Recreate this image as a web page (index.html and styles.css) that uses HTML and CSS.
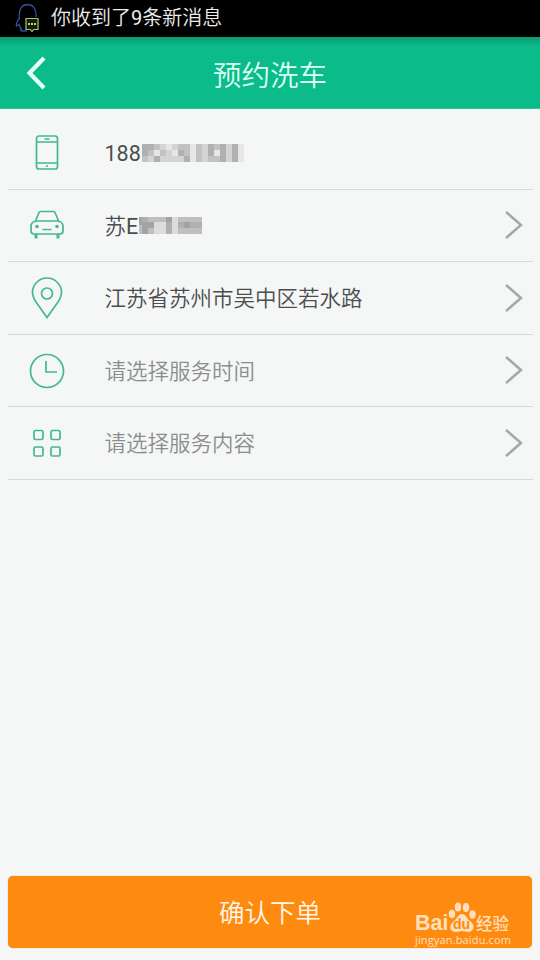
FILE: index.html
```html
<!DOCTYPE html>
<html lang="zh-CN">
<head>
<meta charset="utf-8">
<title>预约洗车</title>
<link rel="stylesheet" href="styles.css">
</head>
<body>
<div class="status">
  <svg class="status-icon" width="26" height="30" viewBox="0 0 26 30" fill="none">
    <path d="M4.500 16C3 5 8 1.500 12.500 1.500S22 5 21 14M4.500 15C2 18 1 21 1.500 23L4 21.500C4.500 24 6 25 6.500 26C5 27 5 27.500 7 28H12" stroke="#314f9c" stroke-width="1.300"/>
    <path d="M11 15.500H23V26.500H18.500L17 28.500L15.500 26.500H11Z" fill="#121c08" stroke="#a3c66b" stroke-width="1.200"/>
    <path d="M13 21H15M16 21H18M19 21H21" stroke="#b8d880" stroke-width="1.800"/>
  </svg>
  <span>你收到了<b class="latin">9</b>条新消息</span>
</div>
<header class="header">
  <svg class="back" width="20" height="34" viewBox="0 0 20 34" fill="none"><path d="M18 2L3.500 17L18 32" stroke="#e4fff6" stroke-width="4.200"/></svg>
  <h1>预约洗车</h1>
</header>
<main class="list">
  <div class="row">
    <svg class="icon" width="40" height="44" viewBox="0 0 40 44"><rect x="9.500" y="5" width="21" height="33" rx="2.500"/><path d="M9.500 11H30.500M9.500 32H30.500M17.500 8H22.500M19 35H21"/></svg>
    <div class="text"><b class="latin">188</b><svg class="mosaic" width="102" height="18" viewBox="0 0 102 18" shape-rendering="crispEdges">
      <path fill="#d4d4d4" d="M0 0H102V18H0Z"/>
      <path fill="#b0b0b0" d="M0 0H6V12H0ZM6 0H12V6H6ZM12 12H18V18H12ZM36 6H42V12H36ZM42 12H48V18H42ZM66 0H72V12H66ZM78 0H84V18H78ZM90 0H96V18H90Z"/>
      <path fill="#c2c2c2" d="M0 12H6V18H0ZM6 6H12V12H6ZM12 0H18V6H12ZM18 6H24V12H18ZM36 0H48V6H36ZM42 6H48V12H42ZM54 0H60V18H54ZM66 12H78V18H66ZM72 0H78V6H72Z"/>
      <path fill="#e6e6e6" d="M12 6H18V12H12ZM24 0H30V6H24ZM30 6H36V12H30ZM48 0H54V18H48ZM72 6H78V12H72ZM96 0H102V18H96Z"/>
    </svg></div>
  </div>
  <div class="row">
    <svg class="icon" width="40" height="44" viewBox="0 0 40 44"><path d="M8 18L12 8.500Q12.400 7.500 13.500 7.500H26.500Q27.600 7.500 28 8.500L32 18M9 17H31Q36 18 36 22.500V27Q36 30 33 30H7Q4 30 4 27V22.500Q4 18 9 17ZM15.500 25.500H24.500"/><path class="solid" d="M7.500 30H10.500V34.500H7.500ZM29.500 30H32.500V34.500H29.500Z"/><circle class="solid" cx="10" cy="22.500" r="1.800"/><circle class="solid" cx="30" cy="22.500" r="1.800"/></svg>
    <div class="text">苏<b class="latin">E</b><svg class="mosaic" width="63" height="17" viewBox="0 0 63 17" shape-rendering="crispEdges">
      <path fill="#bfbfbf" d="M0 0H63V17H0Z"/>
      <path fill="#a3a3a3" d="M0 0H3V8H0ZM3 5H9V17H3ZM9 5H15V11H9ZM27 0H33V5H27ZM45 5H51V11H45Z"/>
      <path fill="#b0b0b0" d="M3 0H9V5H3ZM27 5H33V17H27ZM39 5H45V11H39ZM51 5H63V11H51Z"/>
      <path fill="#dcdcdc" d="M15 5H21V17H15ZM21 5H27V17H21ZM33 0H39V17H33Z"/>
    </svg></div>
    <svg class="arrow" width="20" height="30" viewBox="0 0 20 30"><path d="M2 2L17 15L2 28"/></svg>
  </div>
  <div class="row">
    <svg class="icon" width="40" height="44" viewBox="0 0 40 44"><path d="M20 41.500L9 26Q5.500 20.500 5.500 16.500A14.500 14.500 0 0 1 34.500 16.500Q34.500 20.500 31 26Z"/><circle cx="20" cy="17.500" r="5.500"/></svg>
    <div class="text">江苏省苏州市吴中区若水路</div>
    <svg class="arrow" width="20" height="30" viewBox="0 0 20 30"><path d="M2 2L17 15L2 28"/></svg>
  </div>
  <div class="row">
    <svg class="icon" width="40" height="44" viewBox="0 0 40 44"><circle cx="20" cy="22" r="16.500"/><path d="M19 12V23H30"/></svg>
    <div class="text hint">请选择服务时间</div>
    <svg class="arrow" width="20" height="30" viewBox="0 0 20 30"><path d="M2 2L17 15L2 28"/></svg>
  </div>
  <div class="row">
    <svg class="icon" width="40" height="44" viewBox="0 0 40 44"><rect x="7" y="9.500" width="9" height="9" rx="1.500"/><rect x="24" y="9.500" width="9" height="9" rx="1.500"/><rect x="7" y="26" width="9" height="9" rx="1.500"/><rect x="24" y="26" width="9" height="9" rx="1.500"/></svg>
    <div class="text hint">请选择服务内容</div>
    <svg class="arrow" width="20" height="30" viewBox="0 0 20 30"><path d="M2 2L17 15L2 28"/></svg>
  </div>
</main>
<div class="submit">确认下单</div>
<div class="watermark">
  <div class="brand">
    <span class="bai">Bai</span>
    <span class="paw">
      <svg width="28" height="31" viewBox="0 0 28 31"><ellipse cx="4" cy="12" rx="3.200" ry="4.200"/><ellipse cx="10" cy="5" rx="3.200" ry="4.500"/><ellipse cx="18" cy="5.500" rx="3.200" ry="4.500"/><ellipse cx="24.500" cy="12.500" rx="3.200" ry="4.200"/><path d="M14 12C18 12 19 17 22 19C28 23 26 30 20 30C17 30 16 29 14 29S11 30 8 30C1 30 1 23 5 20C9 17 10 12 14 12Z"/></svg>
      <span class="du">du</span>
    </span>
    <span class="jingyan">经验</span>
  </div>
  <div class="url">jingyan.baidu.com</div>
</div>
</body>
</html>
```
FILE: styles.css
```css
* { box-sizing: border-box; }

body {
  margin: 0;
  width: 540px;
  height: 960px;
  position: relative;
  overflow: hidden;
  display: flex;
  flex-direction: column;
  background: #f4f7f6;
  font-family: Roboto, "Noto Sans CJK SC", sans-serif;
  font-weight: 350;
}

svg { display: block; flex: none; }

.latin { font-weight: 400; }

.status {
  height: 37px;
  padding-left: 15px;
  display: flex;
  align-items: center;
  gap: 10px;
  background: #000;
  color: #ececec;
  font-size: 20px;
  line-height: 34px;
}

.status span { margin-top: -1px; }
.status-icon { margin-top: -1px; }

.header {
  height: 72px;
  padding: 0 26px;
  display: grid;
  grid-template-columns: 20px 1fr 20px;
  align-items: center;
  background: linear-gradient(#0a9c75, #0bbb8a 10px, #0bbc8a);
  border-bottom: 1px solid #2fc49a;
}

.back { margin-top: 1px; }

h1 {
  margin: 8px 0 0;
  text-align: center;
  font-size: 28.500px;
  font-weight: 350;
  line-height: 40px;
  color: #dcfff3;
}

.list { margin: 8px 7px 0 8px; }

.row {
  height: 72.500px;
  display: flex;
  align-items: center;
  padding: 0 9.500px 0 18.500px;
  border-bottom: 1px solid #d5d9d8;
}

.icon {
  margin-top: 1px;
  fill: none;
  stroke: #44b795;
  stroke-width: 1.700;
}

.icon .solid { fill: #44b795; stroke: none; }

.text {
  flex: 1;
  margin: 3px 0 0 38px;
  display: flex;
  align-items: center;
  font-size: 21.500px;
  line-height: 30px;
  color: #4c4e4d;
}

.hint { color: #8c8e8d; }
.mosaic { margin: -2px 0 0 1px; }
.arrow { fill: none; stroke: #a4a8a7; stroke-width: 2.500; }

.submit {
  height: 72px;
  margin: auto 8px 12px;
  border-radius: 5px;
  background: #ff8a10;
  box-shadow: 0 0 1px #d48a40;
  color: #fff6e8;
  font-size: 25.500px;
  line-height: 75px;
  text-align: center;
}

.watermark {
  position: absolute;
  left: 415px;
  top: 902px;
  width: 100px;
  color: #ffe0bd;
}

.brand { display: flex; align-items: flex-end; height: 31px; }

.bai {
  width: 33px;
  font: 700 21.500px/18px "Liberation Sans", sans-serif;
  margin-bottom: 1px;
}

.paw { position: relative; fill: #ffe0bd; }

.du {
  position: absolute;
  left: 5px;
  bottom: 2px;
  font: 700 14px/14px "Liberation Sans", sans-serif;
  color: #ff8a10;
}

.jingyan {
  font-size: 16.500px;
  font-weight: 500;
  line-height: 16px;
}

.url {
  font: 11px/14px "Open Sans", sans-serif;
  letter-spacing: 0.150px;
}
```
